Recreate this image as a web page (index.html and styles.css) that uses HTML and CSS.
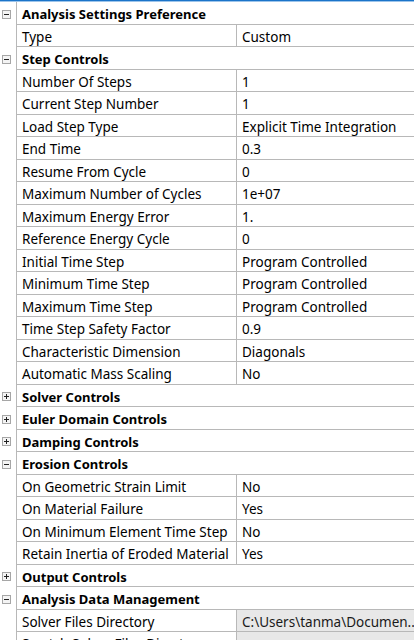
FILE: index.html
```html
<!DOCTYPE html>
<html>
<head>
<meta charset="utf-8">
<link rel="stylesheet" href="styles.css">
</head>
<body>
<div class="panel">
  <div class="topbar"></div>

  <div class="row group"><div class="gut"><span class="tog minus"></span></div><div class="head">Analysis Settings Preference</div></div>
  <div class="row"><div class="gut"></div><div class="name">Type</div><div class="val">Custom</div></div>

  <div class="row group"><div class="gut"><span class="tog minus"></span></div><div class="head">Step Controls</div></div>
  <div class="row"><div class="gut"></div><div class="name">Number Of Steps</div><div class="val">1</div></div>
  <div class="row"><div class="gut"></div><div class="name">Current Step Number</div><div class="val">1</div></div>
  <div class="row"><div class="gut"></div><div class="name">Load Step Type</div><div class="val">Explicit Time Integration</div></div>
  <div class="row"><div class="gut"></div><div class="name">End Time</div><div class="val">0.3</div></div>
  <div class="row"><div class="gut"></div><div class="name">Resume From Cycle</div><div class="val">0</div></div>
  <div class="row"><div class="gut"></div><div class="name">Maximum Number of Cycles</div><div class="val">1e+07</div></div>
  <div class="row"><div class="gut"></div><div class="name">Maximum Energy Error</div><div class="val">1.</div></div>
  <div class="row"><div class="gut"></div><div class="name">Reference Energy Cycle</div><div class="val">0</div></div>
  <div class="row"><div class="gut"></div><div class="name">Initial Time Step</div><div class="val">Program Controlled</div></div>
  <div class="row"><div class="gut"></div><div class="name">Minimum Time Step</div><div class="val">Program Controlled</div></div>
  <div class="row"><div class="gut"></div><div class="name">Maximum Time Step</div><div class="val">Program Controlled</div></div>
  <div class="row"><div class="gut"></div><div class="name">Time Step Safety Factor</div><div class="val">0.9</div></div>
  <div class="row"><div class="gut"></div><div class="name">Characteristic Dimension</div><div class="val">Diagonals</div></div>
  <div class="row"><div class="gut"></div><div class="name">Automatic Mass Scaling</div><div class="val">No</div></div>

  <div class="row group"><div class="gut"><span class="tog plus"></span></div><div class="head">Solver Controls</div></div>
  <div class="row group"><div class="gut"><span class="tog plus"></span></div><div class="head">Euler Domain Controls</div></div>
  <div class="row group"><div class="gut"><span class="tog plus"></span></div><div class="head">Damping Controls</div></div>

  <div class="row group"><div class="gut"><span class="tog minus"></span></div><div class="head">Erosion Controls</div></div>
  <div class="row"><div class="gut"></div><div class="name">On Geometric Strain Limit</div><div class="val">No</div></div>
  <div class="row"><div class="gut"></div><div class="name">On Material Failure</div><div class="val">Yes</div></div>
  <div class="row"><div class="gut"></div><div class="name">On Minimum Element Time Step</div><div class="val">No</div></div>
  <div class="row"><div class="gut"></div><div class="name">Retain Inertia of Eroded Material</div><div class="val">Yes</div></div>

  <div class="row group"><div class="gut"><span class="tog plus"></span></div><div class="head">Output Controls</div></div>

  <div class="row group"><div class="gut"><span class="tog minus"></span></div><div class="head">Analysis Data Management</div></div>
  <div class="row"><div class="gut"></div><div class="name">Solver Files Directory</div><div class="val ro">C:\Users\tanma\Documen...</div></div>
  <div class="row"><div class="gut"></div><div class="name">Scratch Solver Files Directory</div><div class="val ro"></div></div>
</div>
</body>
</html>
```
FILE: styles.css
```css
html, body {
  margin: 0;
  padding: 0;
  background: #ffffff;
}
.panel {
  width: 414px;
  height: 640px;
  overflow: hidden;
  font-family: "Noto Sans", "Open Sans", sans-serif;
  font-size: 13.5px;
  color: #000;
}
.topbar {
  height: 2px;
  background: linear-gradient(#1b74c9 0, #1b74c9 1px, #9cc4ea 1px, #9cc4ea 2px);
}
.row {
  display: grid;
  grid-template-columns: 17px 220px 1fr;
  height: 22.5px;
}
.gut {
  border-right: 1px solid #b8b8b8;
  display: flex;
  align-items: center;
  padding-left: 2px;
}
.name, .val, .head {
  border-bottom: 1px solid #b8b8b8;
  line-height: 18.5px;
  padding-top: 3px;
  padding-left: 5px;
  white-space: nowrap;
  overflow: hidden;
}
.name {
  border-right: 1px solid #b8b8b8;
}
.head {
  grid-column: 2 / 4;
  font-weight: 700;
  font-size: 13px;
}
.val.ro {
  background: #e8e8e8;
  color: #1a1a1a;
}
.tog {
  position: relative;
  display: block;
  width: 9px;
  height: 9px;
  box-sizing: border-box;
  border: 1px solid #a6a6a6;
  background: #f4f4f4;
  margin-top: 2px;
}
.tog::before,
.tog::after {
  content: "";
  position: absolute;
  background: #222;
}
.tog::before {
  left: 1px;
  top: 3px;
  width: 5px;
  height: 1px;
}
.tog.plus::after {
  left: 3px;
  top: 1px;
  width: 1px;
  height: 5px;
}
```
